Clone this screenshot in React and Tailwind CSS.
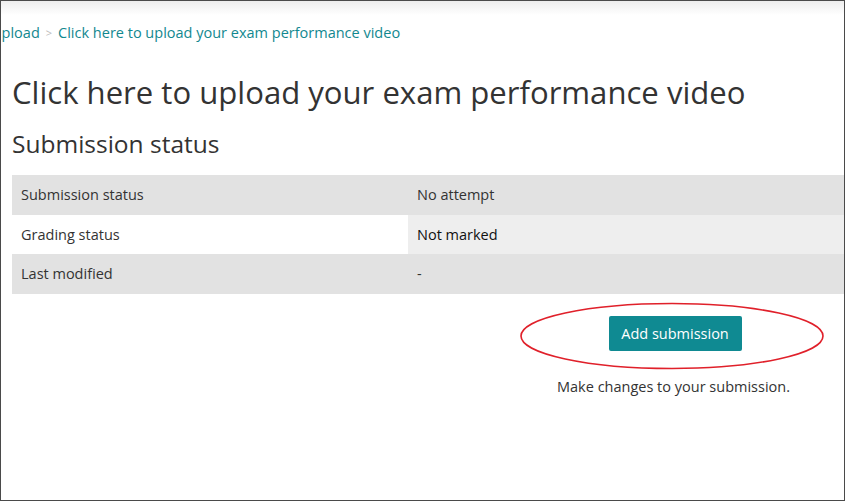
export default function App() {
  const font = { fontFamily: '"Open Sans", "Noto Sans", sans-serif' };
  return (
    <div className="w-[845px] h-[501px] overflow-hidden bg-white border border-[#4a4a4a] relative" style={font}>
      <div className="h-[14px] bg-gradient-to-b from-[#ededed] to-white" />
      <div className="flex items-center whitespace-nowrap text-[14.5px] text-[#12888f] h-[36px] ml-[-10px]">
        <span>Upload</span>
        <span className="mx-[6px] text-[#bbbbbb] text-[11px]">&gt;</span>
        <span>Click here to upload your exam performance video</span>
      </div>
      <div className="pl-[11px]">
        <h1 className="text-[31.1px] leading-[40px] text-[#333333] mt-[21px] whitespace-nowrap">
          Click here to upload your exam performance video
        </h1>
        <h3 className="text-[24.5px] leading-[34px] text-[#333333] mt-[15px]">Submission status</h3>
        <div className="mt-[14px] text-[14.5px] text-[#333333]">
          <div className="flex h-[40px] items-center bg-[#e2e2e2]">
            <div className="w-[396px] pl-[9px]">Submission status</div>
            <div className="flex-1 pl-[9px]">No attempt</div>
          </div>
          <div className="flex h-[39px] items-stretch">
            <div className="w-[396px] pl-[9px] flex items-center bg-white">Grading status</div>
            <div className="flex-1 pl-[9px] flex items-center bg-[#eeeeee] text-[#111111]">Not marked</div>
          </div>
          <div className="flex h-[40px] items-center bg-[#e2e2e2]">
            <div className="w-[396px] pl-[9px]">Last modified</div>
            <div className="flex-1 pl-[9px]">-</div>
          </div>
        </div>
        <div className="flex flex-col items-center w-[600px] ml-[363px]">
          <div className="relative mt-[22px]">
            <button className="bg-[#0f8a92] text-white text-[14.5px] h-[35px] w-[133px] rounded-[2px]">
              Add submission
            </button>
            <svg className="absolute left-[-90px] top-[-14px]" width="306" height="68" viewBox="0 0 306 68">
              <ellipse cx="153" cy="34" rx="151" ry="32.5" fill="none" stroke="#e0202a" strokeWidth="1.6" />
            </svg>
          </div>
          <div className="mt-[25px] mr-[3px] text-[14.5px] text-[#333333]">Make changes to your submission.</div>
        </div>
      </div>
    </div>
  );
}
